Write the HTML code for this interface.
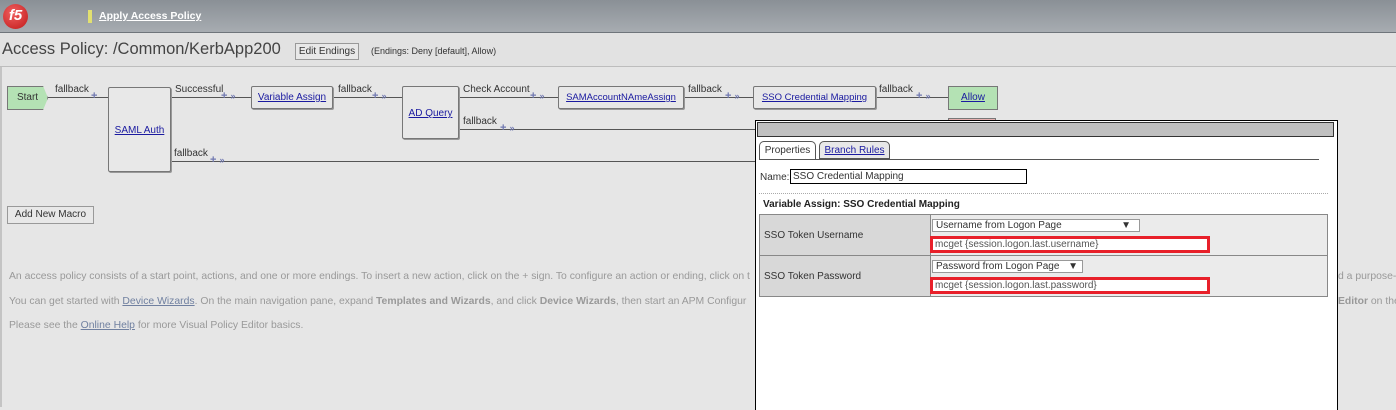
<!DOCTYPE html>
<html><head><style>
*{margin:0;padding:0;box-sizing:border-box}
body{width:1396px;height:407px;overflow:hidden;background:#e6e6e6;font-family:"Liberation Sans",sans-serif;font-size:10px;color:#333;position:relative}
.a{position:absolute;white-space:nowrap}
.hdr{left:0;top:0;width:1396px;height:33px;background:linear-gradient(#8a9096,#a7acb1);border-bottom:1px solid #6f757b}
.tr{left:0;top:33px;width:1396px;height:34px;background:#e2e2e2;border-bottom:1px solid #bdbdbd}
.node{background:#e8e8e8;border:1px solid #777;border-radius:2px;box-shadow:1px 1px 0 #999;font-size:10px}
.lk{color:#1a1aa0;text-decoration:underline}
.ln{height:1px;background:#555}
.lbl{font-size:10px;color:#333}
.plus{color:#7078b0;font-size:11px;font-weight:bold}
.t{font-size:10.4px;color:#999}
</style></head><body>
<div class="a hdr"></div>
<div class="a" style="left:3px;top:4px;width:25px;height:25px;border-radius:50%;background:radial-gradient(circle at 40% 35%,#f06060,#c01818);color:#fff;font-weight:bold;font-size:15px;font-style:italic;text-align:center;line-height:24px">f5</div>
<div class="a" style="left:88px;top:10px;width:4px;height:13px;background:#e2e070"></div>
<div class="a" style="left:99px;top:10px;color:#fff;font-weight:bold;text-decoration:underline;font-size:10.5px">Apply Access Policy</div>
<div class="a" style="left:0;top:33px;width:2px;height:374px;background:#c4c4c4"></div>
<div class="a tr"></div>
<div class="a" style="left:2px;top:40px;font-size:16.5px;color:#444">Access Policy: /Common/KerbApp200</div>
<div class="a" style="left:295px;top:43px;width:64px;height:17px;border:1px solid #999;background:#e8e8e8;font-size:10px;text-align:center;line-height:15px">Edit Endings</div>
<div class="a" style="left:371px;top:46px;font-size:9px">(Endings: Deny [default], Allow)</div>

<div class="a ln" style="left:48px;top:97px;width:60px"></div>
<div class="a ln" style="left:171px;top:97px;width:80px"></div>
<div class="a ln" style="left:333px;top:97px;width:69px"></div>
<div class="a ln" style="left:459px;top:97px;width:99px"></div>
<div class="a ln" style="left:684px;top:97px;width:69px"></div>
<div class="a ln" style="left:876px;top:97px;width:72px"></div>
<div class="a ln" style="left:459px;top:129px;width:296px"></div>
<div class="a ln" style="left:171px;top:161px;width:584px"></div>
<div class="a lbl" style="left:55px;top:84px">fallback</div>
<div class="a plus" style="left:91px;top:90px">+</div>
<div class="a lbl" style="left:175px;top:84px">Successful</div>
<div class="a plus" style="left:221px;top:90px">+ <span style="font-size:9px">»</span></div>
<div class="a lbl" style="left:338px;top:84px">fallback</div>
<div class="a plus" style="left:372px;top:90px">+ <span style="font-size:9px">»</span></div>
<div class="a lbl" style="left:463px;top:84px">Check Account</div>
<div class="a plus" style="left:530px;top:90px">+ <span style="font-size:9px">»</span></div>
<div class="a lbl" style="left:688px;top:84px">fallback</div>
<div class="a plus" style="left:725px;top:90px">+ <span style="font-size:9px">»</span></div>
<div class="a lbl" style="left:879px;top:84px">fallback</div>
<div class="a plus" style="left:916px;top:90px">+ <span style="font-size:9px">»</span></div>
<div class="a lbl" style="left:463px;top:116px">fallback</div>
<div class="a plus" style="left:500px;top:122px">+ <span style="font-size:9px">»</span></div>
<div class="a lbl" style="left:174px;top:148px">fallback</div>
<div class="a plus" style="left:210px;top:154px">+ <span style="font-size:9px">»</span></div>

<div class="a" style="left:7px;top:86px;width:41px;height:24px;background:#b4e2b4;border:1px solid #777;clip-path:polygon(0 0,88% 0,100% 50%,88% 100%,0 100%);text-align:center;line-height:22px;font-size:10px">Start</div>
<div class="a node" style="left:108px;top:87px;width:63px;height:85px;text-align:center;padding-top:37px"><span class="lk">SAML Auth</span></div>
<div class="a node" style="left:251px;top:86px;width:82px;height:23px;text-align:center;line-height:22px"><span class="lk">Variable Assign</span></div>
<div class="a node" style="left:402px;top:86px;width:57px;height:53px;text-align:center;padding-top:21px"><span class="lk">AD Query</span></div>
<div class="a node" style="left:558px;top:86px;width:126px;height:23px;text-align:center;line-height:22px;font-size:9.5px"><span class="lk">SAMAccountNAmeAssign</span></div>
<div class="a node" style="left:753px;top:86px;width:123px;height:23px;text-align:center;line-height:22px;font-size:9.5px"><span class="lk">SSO Credential Mapping</span></div>
<div class="a" style="left:948px;top:86px;width:50px;height:24px;background:#b4e2b4;border:1px solid #777;text-align:center;line-height:22px"><span class="lk">Allow</span></div>
<div class="a" style="left:948px;top:118px;width:48px;height:6px;background:#e8b0b0;border:1px solid #777"></div>

<div class="a" style="left:7px;top:206px;width:87px;height:18px;border:1px solid #999;background:#e8e8e8;text-align:center;line-height:16px;font-size:10px">Add New Macro</div>

<div class="a t" style="left:9px;top:271px">An access policy consists of a start point, actions, and one or more endings. To insert a new action, click on the + sign. To configure an action or ending, click on t</div>
<div class="a t" style="left:9px;top:296px">You can get started with <u style="color:#7080a0">Device Wizards</u>. On the main navigation pane, expand <b>Templates and Wizards</b>, and click <b>Device Wizards</b>, then start an APM Configur</div>
<div class="a t" style="left:9px;top:320px">Please see the <u style="color:#7080a0">Online Help</u> for more Visual Policy Editor basics.</div>
<div class="a t" style="left:1338px;top:271px">d a purpose-</div>
<div class="a t" style="left:1338px;top:296px"><b>Editor</b> on the</div>

<div class="a" style="left:755px;top:120px;width:583px;height:290px;background:#fff;border:1px solid #000;border-bottom:none"></div>
<div class="a" style="left:757px;top:122px;width:577px;height:15px;background:#c0c0c0;border:1px solid #333"></div>
<div class="a" style="left:759px;top:141px;width:57px;height:19px;border:1px solid #555;border-bottom:none;border-radius:5px 5px 0 0;background:#fff;text-align:center;line-height:18px;font-size:10px">Properties</div>
<div class="a" style="left:819px;top:141px;width:71px;height:18px;border:1px solid #555;border-radius:5px 5px 0 0;background:#e8e8e8;text-align:center;line-height:17px"><span class="lk">Branch Rules</span></div>
<div class="a" style="left:759px;top:159px;width:560px;height:1px;background:#555"></div>
<div class="a" style="left:760px;top:172px">Name:</div>
<div class="a" style="left:790px;top:169px;width:237px;height:15px;border:1px solid #000;padding-left:2px;line-height:13px">SSO Credential Mapping</div>
<div class="a" style="left:759px;top:193px;width:569px;border-top:1px dotted #aaa"></div>
<div class="a" style="left:763px;top:199px;font-weight:bold;color:#222">Variable Assign: SSO Credential Mapping</div>
<div class="a" style="left:759px;top:214px;width:569px;height:83px;border:1px solid #888;background:#ebebeb"></div>
<div class="a" style="left:760px;top:215px;width:171px;height:81px;background:#d8d8d8;border-right:1px solid #888"></div>
<div class="a" style="left:760px;top:255px;width:567px;height:1px;background:#888"></div>
<div class="a" style="left:764px;top:230px">SSO Token Username</div>
<div class="a" style="left:764px;top:271px">SSO Token Password</div>
<div class="a" style="left:932px;top:219px;width:208px;height:13px;border:1px solid #999;background:#fff;padding-left:3px;line-height:11px">Username from Logon Page<span style="position:absolute;right:8px">▼</span></div>
<div class="a" style="left:930px;top:236px;width:280px;height:17px;border:3px solid #e8202a;background:#fff;padding-left:2px;line-height:11px;color:#555">mcget {session.logon.last.username}</div>
<div class="a" style="left:932px;top:260px;width:151px;height:13px;border:1px solid #999;background:#fff;padding-left:3px;line-height:11px">Password from Logon Page<span style="position:absolute;right:4px">▼</span></div>
<div class="a" style="left:930px;top:277px;width:280px;height:17px;border:3px solid #e8202a;background:#fff;padding-left:2px;line-height:11px;color:#555">mcget {session.logon.last.password}</div>
</body></html>
